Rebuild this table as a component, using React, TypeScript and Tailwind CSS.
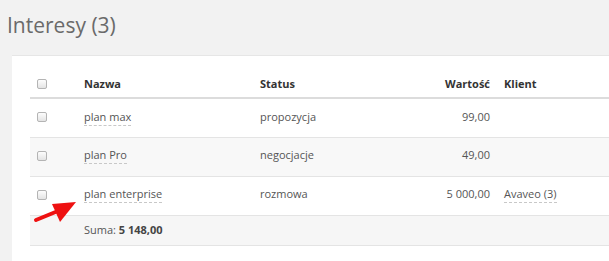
import { type FC } from 'react'

interface IDeal {
  readonly name: string
  readonly status: string
  readonly value: string
  readonly client?: string
}

const deals: IDeal[] = [
  { name: 'plan max', status: 'propozycja', value: '99,00' },
  { name: 'plan Pro', status: 'negocjacje', value: '49,00' },
  { name: 'plan enterprise', status: 'rozmowa', value: '5 000,00', client: 'Avaveo (3)' }
]

const Checkbox: FC = () => (
  <span className="block w-[10px] h-[10px] rounded-[2px] border border-[#b4b4b4] bg-gradient-to-b from-[#fdfdfd] to-[#e4e4e4]"/>
)

const App: FC = () => {
  return (
    <div
      className="w-[609px] h-[261px] overflow-hidden bg-[#f2f2f2] text-[#555] relative"
      style={{ fontFamily: '"Open Sans", "Liberation Sans", sans-serif' }}
    >
      <h1 className="pl-[7px] pt-[12px] h-[55px] text-[21px] leading-[26px] font-normal text-[#6a6a6a]">
        Interesy (3)
      </h1>

      <div className="ml-[12px] w-[640px] h-[220px] bg-white border-t border-[#e6e6e6] pl-[18px] pt-[16px]">
        <table className="table-fixed border-collapse w-[620px] text-[11px]">
          <colgroup>
            <col className="w-[47px]"/>
            <col className="w-[176px]"/>
            <col className="w-[147px]"/>
            <col className="w-[97px]"/>
            <col/>
          </colgroup>
          <thead>
            <tr className="h-[26px] border-b-2 border-[#dcdcdc] text-[#333] font-bold">
              <th className="px-[7px] pb-[1px] text-left align-middle"><Checkbox/></th>
              <th className="px-[7px] pb-[1px] text-left">Nazwa</th>
              <th className="px-[7px] pb-[1px] text-left">Status</th>
              <th className="px-[7px] pb-[1px] text-right">Wartość</th>
              <th className="px-[7px] pb-[1px] text-left">Klient</th>
            </tr>
          </thead>
          <tbody>
            {deals.map((deal, i) => (
              <tr
                key={deal.name}
                className={`h-[39px] border-b border-[#e4e4e4] ${i % 2 === 1 ? 'bg-[#f8f8f8]' : 'bg-white'}`}
              >
                <td className="px-[7px] pb-[2px] align-middle"><Checkbox/></td>
                <td className="px-[7px] pb-[2px]">
                  <span className="border-b border-dashed border-[#c8c8c8] pb-[1px]">{deal.name}</span>
                </td>
                <td className="px-[7px] pb-[2px]">{deal.status}</td>
                <td className="px-[7px] pb-[2px] text-right">{deal.value}</td>
                <td className="px-[7px] pb-[2px]">
                  {deal.client && (
                    <span className="border-b border-dashed border-[#c8c8c8] pb-[1px]">{deal.client}</span>
                  )}
                </td>
              </tr>
            ))}
          </tbody>
          <tfoot>
            <tr className="h-[30px] bg-[#f6f6f6] border-b border-[#e4e4e4]">
              <td/>
              <td className="px-[7px]" colSpan={4}>
                Suma: <b className="text-[#444]">5 148,00</b>
              </td>
            </tr>
          </tfoot>
        </table>
      </div>

      {/* red pointer next to the last deal */}
      <svg className="absolute left-0 top-0 pointer-events-none" width="609" height="261">
        <line x1="36" y1="220" x2="58" y2="211" stroke="#ee1111" strokeWidth="4" strokeLinecap="round"/>
        <polygon points="76,202 52,204 60,222" fill="#ee1111"/>
      </svg>
    </div>
  )
}

export default App
